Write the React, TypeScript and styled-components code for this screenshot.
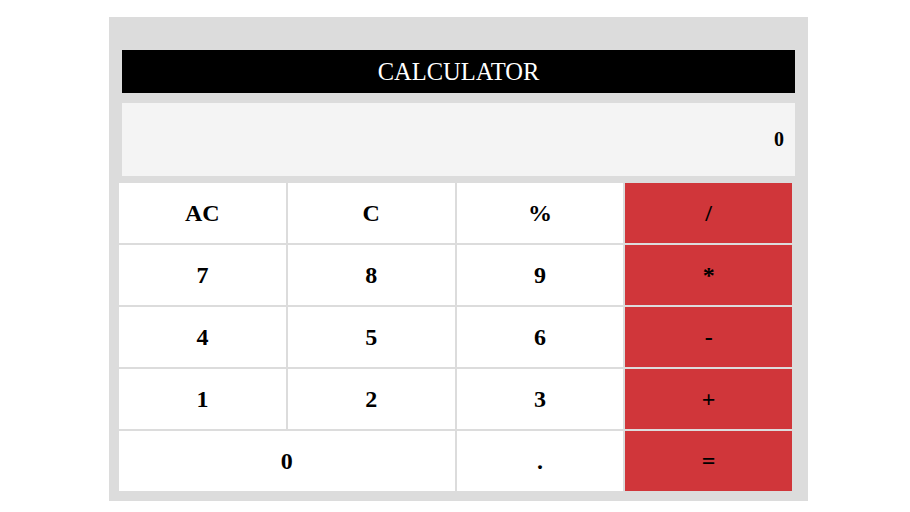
import React, { useState } from 'react';
import styled, { createGlobalStyle } from 'styled-components';

const GlobalStyle = createGlobalStyle`
  body {
    margin: 0;
    background: #ffffff;
    font-family: 'Liberation Serif', 'Times New Roman', serif;
  }
`;

const Shell = styled.div`
  width: 699px;
  margin: 17px 0 0 109px;
  padding: 33px 16px 10px 10px;
  box-sizing: border-box;
  background: #dcdcdc;
`;

const Title = styled.h1`
  margin: 0 -3px 10px 3px;
  height: 43px;
  background: #000000;
  color: #ffffff;
  font-size: 24.5px;
  font-weight: normal;
  display: flex;
  align-items: center;
  justify-content: center;
`;

const Display = styled.div`
  margin: 0 -3px 7px 3px;
  height: 73px;
  background: #f4f4f4;
  display: flex;
  align-items: center;
  justify-content: flex-end;
  padding-right: 11px;
  font-size: 20px;
  font-weight: bold;
`;

const Pad = styled.div`
  display: grid;
  grid-template-columns: repeat(4, 1fr);
  grid-auto-rows: 60px;
  gap: 2px;
`;

const Key = styled.button<{ $op?: boolean; $wide?: boolean }>`
  grid-column: ${p => (p.$wide ? 'span 2' : 'auto')};
  border: none;
  padding: 0;
  background: ${p => (p.$op ? '#d0363a' : '#ffffff')};
  color: #000000;
  font-family: 'Liberation Serif', 'Times New Roman', serif;
  font-size: 24px;
  font-weight: bold;
  cursor: pointer;
`;

const keys: { label: string; op?: boolean; wide?: boolean }[] = [
  { label: 'AC' }, { label: 'C' }, { label: '%' }, { label: '/', op: true },
  { label: '7' }, { label: '8' }, { label: '9' }, { label: '*', op: true },
  { label: '4' }, { label: '5' }, { label: '6' }, { label: '-', op: true },
  { label: '1' }, { label: '2' }, { label: '3' }, { label: '+', op: true },
  { label: '0', wide: true }, { label: '.' }, { label: '=', op: true },
];

export default function App() {
  const [value] = useState('0');

  return (
    <>
      <GlobalStyle />
      <Shell>
        <Title>CALCULATOR</Title>
        <Display>{value}</Display>
        <Pad>
          {keys.map(k => (
            <Key key={k.label} $op={k.op} $wide={k.wide}>
              {k.label}
            </Key>
          ))}
        </Pad>
      </Shell>
    </>
  );
}
